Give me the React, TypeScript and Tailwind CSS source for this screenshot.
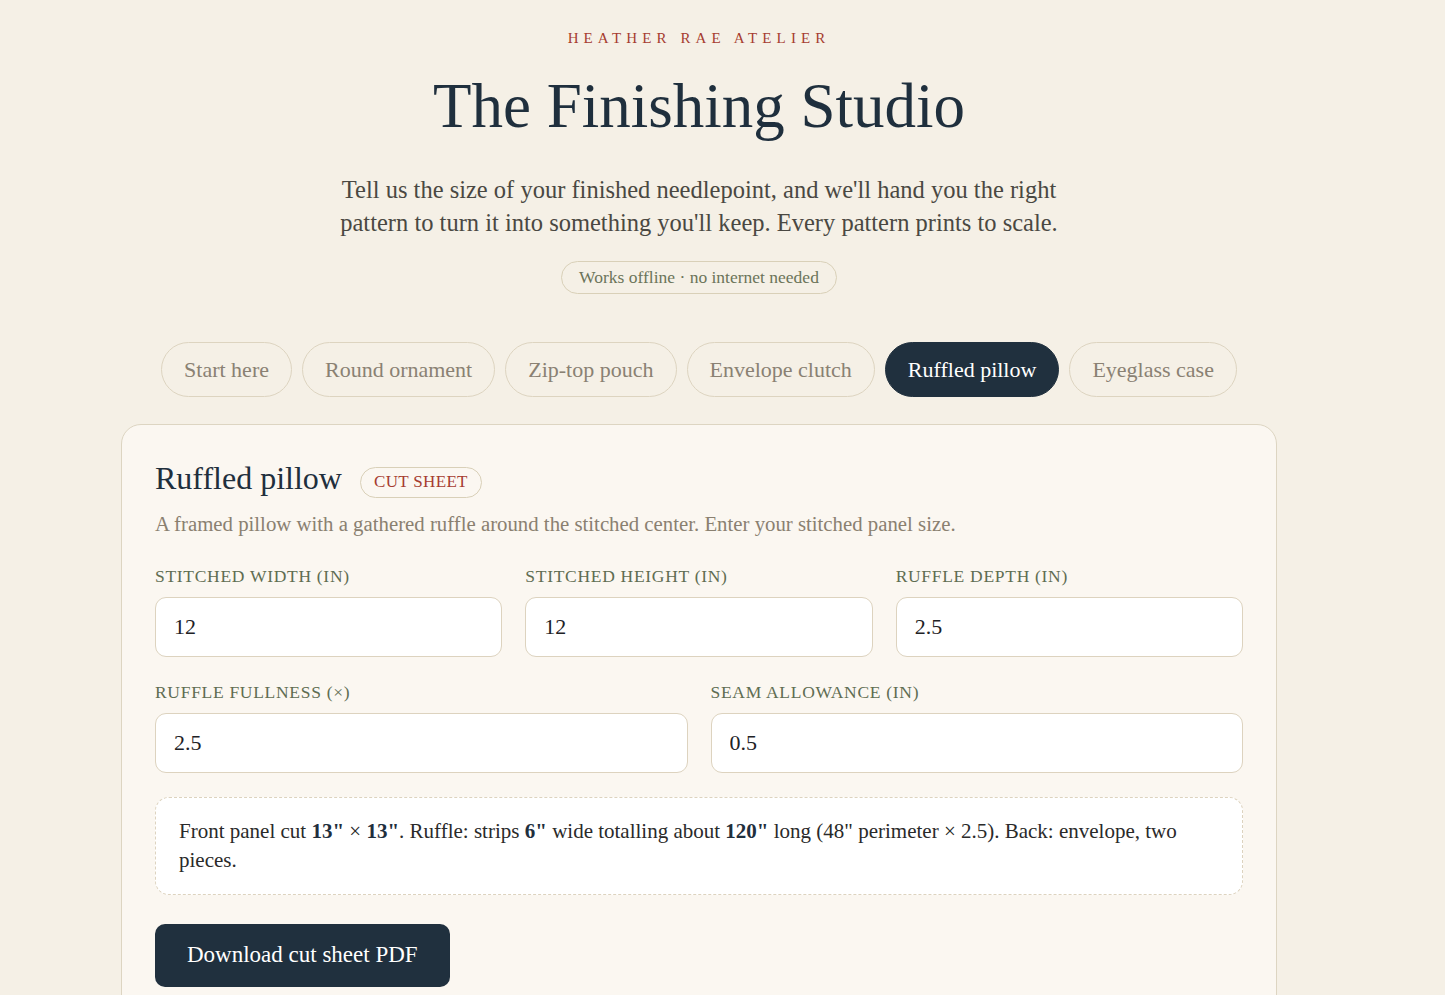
import { useState } from "react";

const tabs = ["Start here", "Round ornament", "Zip-top pouch", "Envelope clutch", "Ruffled pillow", "Eyeglass case"];

function Field({ label, value }: { label: string; value: string }) {
  return (
    <label className="flex flex-col">
      <span className="text-[17.5px] uppercase tracking-[0.04em] text-[#5f6d52] leading-6 mb-[9px]">{label}</span>
      <input
        defaultValue={value}
        className="h-[60px] rounded-[11px] border border-[#ddd3bf] bg-white px-[18px] text-[22px] text-[#1e2226] outline-none"
      />
    </label>
  );
}

export default function App() {
  const [active, setActive] = useState("Ruffled pillow");

  return (
    <div className="min-h-screen bg-[#f5f0e6] pr-[47px] font-['Liberation_Serif',serif]">
      <div className="mx-auto w-[1156px] pt-[28px]">
        {/* Header */}
        <div className="flex flex-col items-center text-center">
          <div className="text-[15px] uppercase tracking-[0.34em] text-[#a63c30] leading-5">Heather Rae Atelier</div>
          <h1 className="mt-[22px] text-[63px] leading-[72px] text-[#1f2f3d]">The Finishing Studio</h1>
          <p className="mt-[31px] text-[24.5px] leading-[33px] text-[#4a4842]">
            Tell us the size of your finished needlepoint, and we'll hand you the right
            <br />
            pattern to turn it into something you'll keep. Every pattern prints to scale.
          </p>
          <div className="mt-[22px] rounded-full border border-[#d9d0b8] px-[17px] h-[33px] flex items-center text-[17.5px] text-[#6b7459]">
            Works offline · no internet needed
          </div>
        </div>

        {/* Tabs */}
        <div className="mt-[48px] flex justify-center gap-[10px]">
          {tabs.map((t) => (
            <button
              key={t}
              onClick={() => setActive(t)}
              className={
                t === active
                  ? "h-[55px] rounded-full border border-[#20303e] bg-[#20303e] px-[22px] text-[22px] text-white"
                  : "h-[55px] rounded-full border border-[#ddd4c0] px-[22px] text-[22px] text-[#8a8173]"
              }
            >
              {t}
            </button>
          ))}
        </div>

        {/* Card */}
        <div className="mt-[27px] rounded-[20px] border border-[#ddd5c2] bg-[#fbf7f1] px-[33px] pt-[33px] pb-[40px]">
          <div className="flex items-center gap-[18px]">
            <h2 className="text-[32px] leading-[40px] text-[#1f2f3d]">Ruffled pillow</h2>
            <span className="mt-[8px] h-[31px] flex items-center rounded-full border border-[#d9d0b8] px-[13px] text-[17px] uppercase tracking-[0.02em] text-[#a63c30]">
              Cut sheet
            </span>
          </div>
          <p className="mt-[14px] text-[20.8px] leading-6 text-[#8a8070]">
            A framed pillow with a gathered ruffle around the stitched center. Enter your stitched panel size.
          </p>

          <div className="mt-[28px] grid grid-cols-3 gap-x-[23px]">
            <Field label="Stitched width (in)" value="12" />
            <Field label="Stitched height (in)" value="12" />
            <Field label="Ruffle depth (in)" value="2.5" />
          </div>
          <div className="mt-[23px] grid grid-cols-2 gap-x-[23px]">
            <Field label="Ruffle fullness (×)" value="2.5" />
            <Field label="Seam allowance (in)" value="0.5" />
          </div>

          <div className="mt-[24px] rounded-[14px] border border-dashed border-[#ddd3bf] bg-white px-[23px] py-[19px] text-[21px] leading-[29px] text-[#2a2a2a]">
            Front panel cut <b className="font-bold text-[#1f2f3d]">13"</b> × <b className="font-bold text-[#1f2f3d]">13"</b>. Ruffle: strips{" "}
            <b className="font-bold text-[#1f2f3d]">6"</b> wide totalling about <b className="font-bold text-[#1f2f3d]">120"</b> long (48" perimeter × 2.5). Back: envelope, two pieces.
          </div>

          <button className="mt-[29px] h-[63px] rounded-[10px] bg-[#20303e] px-[32px] text-[23px] text-white">
            Download cut sheet PDF
          </button>
        </div>
      </div>
    </div>
  );
}
